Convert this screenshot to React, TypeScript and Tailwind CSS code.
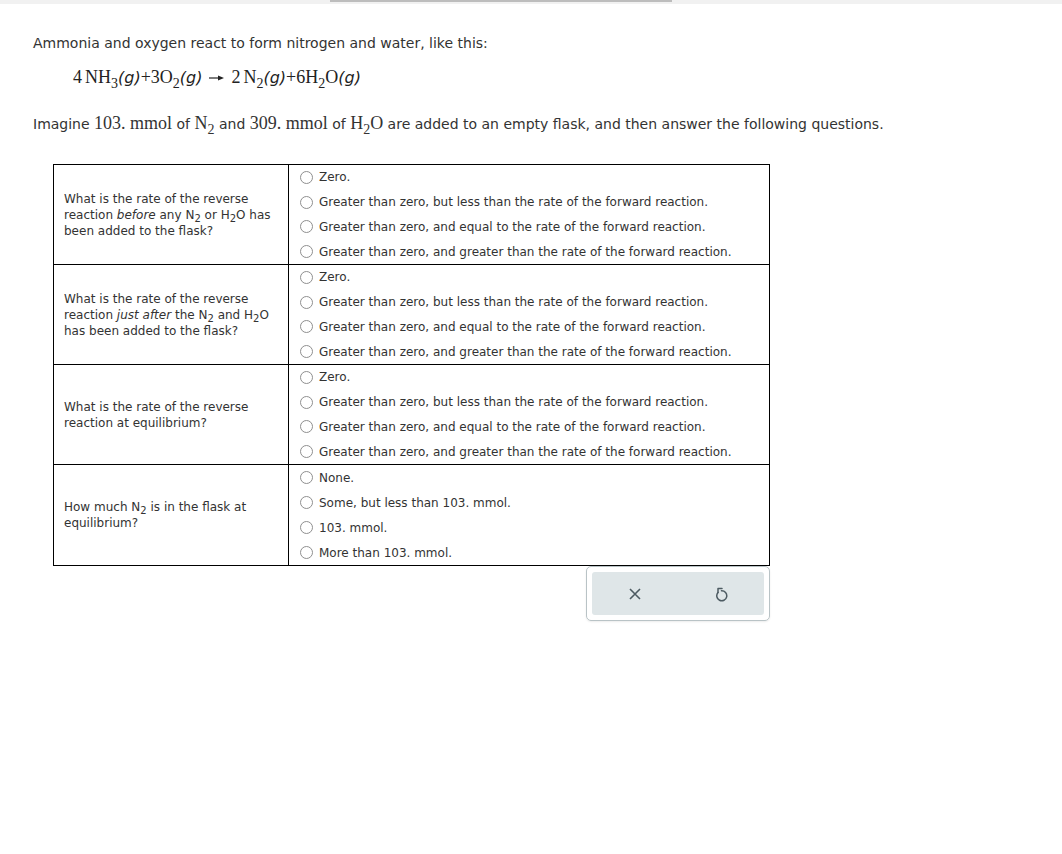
import type { ReactNode } from 'react';

const OPTS_RATE = [
  'Zero.',
  'Greater than zero, but less than the rate of the forward reaction.',
  'Greater than zero, and equal to the rate of the forward reaction.',
  'Greater than zero, and greater than the rate of the forward reaction.',
];

const OPTS_N2 = ['None.', 'Some, but less than 103. mmol.', '103. mmol.', 'More than 103. mmol.'];

const serif = { fontFamily: '"Liberation Serif", "Times New Roman", serif' };

function Sub({ children }: { children: ReactNode }) {
  return <span className="text-[10px] leading-none relative top-[3px]">{children}</span>;
}

function SerifSub({ children }: { children: ReactNode }) {
  return <span className="text-[14px] leading-none relative top-[5px]">{children}</span>;
}

function G() {
  return <i className="text-[16px]" style={{ fontFamily: '"DejaVu Sans", Verdana, sans-serif' }}>(g)</i>;
}

function Radio() {
  return <span className="inline-block w-[13px] h-[13px] rounded-full border border-[#8f8f8f] bg-white shrink-0" />;
}

function Row({ question, options, last }: { question: ReactNode; options: string[]; last?: boolean }) {
  return (
    <div className={`flex h-[100px] ${last ? '' : 'border-b border-black'}`}>
      <div className="w-[235px] border-r border-black px-[10px] flex items-center text-[12px] leading-[16px] text-[#333]">
        <div>{question}</div>
      </div>
      <div className="flex-1 pl-[11px] flex flex-col">
        {options.map((o) => (
          <div key={o} className="flex-1 flex items-center gap-[6px] text-[12px] text-[#333]">
            <Radio />
            <span>{o}</span>
          </div>
        ))}
      </div>
    </div>
  );
}

export default function App() {
  return (
    <div className="min-h-[854px] bg-white" style={{ fontFamily: '"DejaVu Sans", Verdana, sans-serif' }}>
      <div className="h-[4px] bg-[#f1f1f1] flex">
        <div className="ml-[330px] w-[342px] h-[2px] bg-[#bdbdbd]" />
      </div>

      <div className="pl-[33px] pt-[30px] text-[14px] text-[#333]">
        <p className="leading-[18px]">Ammonia and oxygen react to form nitrogen and water, like this:</p>

        <p className="pl-[40px] mt-[14px] text-[18px] leading-[22px] text-[#222] flex items-baseline" style={serif}>
          <span>4</span>
          <span className="ml-[3px]">NH</span>
          <SerifSub>3</SerifSub>
          <G />
          <span>+3O</span>
          <SerifSub>2</SerifSub>
          <G />
          <svg className="mx-[7px] self-center" width="15" height="8" viewBox="0 0 15 8">
            <path d="M0 4 H10" stroke="#222" strokeWidth="1.2" />
            <path d="M9 1.5 L15 4 L9 6.5 Z" fill="#222" />
          </svg>
          <span>2</span>
          <span className="ml-[3px]">N</span>
          <SerifSub>2</SerifSub>
          <G />
          <span>+6H</span>
          <SerifSub>2</SerifSub>
          <span>O</span>
          <G />
        </p>

        <p className="mt-[23px] leading-[22px]">
          Imagine{' '}
          <span className="text-[18px]" style={serif}>
            103. mmol
          </span>{' '}
          of{' '}
          <span className="text-[18px]" style={serif}>
            N<SerifSub>2</SerifSub>
          </span>{' '}
          and{' '}
          <span className="text-[18px]" style={serif}>
            309. mmol
          </span>{' '}
          of{' '}
          <span className="text-[18px]" style={serif}>
            H<SerifSub>2</SerifSub>O
          </span>{' '}
          are added to an empty flask, and then answer the following questions.
        </p>
      </div>

      <div className="ml-[53px] mt-[29px] w-[717px]">
        <div className="border border-black">
          <Row
            question={
              <>
                What is the rate of the reverse reaction <i>before</i> any N<Sub>2</Sub> or H<Sub>2</Sub>O has been added
                to the flask?
              </>
            }
            options={OPTS_RATE}
          />
          <Row
            question={
              <>
                What is the rate of the reverse reaction <i>just after</i> the N<Sub>2</Sub> and H<Sub>2</Sub>O has been
                added to the flask?
              </>
            }
            options={OPTS_RATE}
          />
          <Row question={<>What is the rate of the reverse reaction at equilibrium?</>} options={OPTS_RATE} />
          <Row
            question={
              <>
                How much N<Sub>2</Sub> is in the flask at equilibrium?
              </>
            }
            options={OPTS_N2}
            last
          />
        </div>

        <div className="flex justify-end">
          <div className="w-[184px] h-[55px] border border-[#b9c3c6] rounded-[5px] p-[5px] shadow-[0_1px_2px_rgba(0,0,0,0.08)]">
            <div className="h-full bg-[#dfe6e8] rounded-[3px] flex items-center justify-around">
              <svg width="14" height="14" viewBox="0 0 14 14" fill="none" stroke="#4d5b62" strokeWidth="1.6">
                <path d="M2 2 L12 12 M12 2 L2 12" />
              </svg>
              <svg width="14" height="16" viewBox="0 0 14 16" fill="none" stroke="#4d5b62" strokeWidth="1.5" strokeLinecap="round" strokeLinejoin="round">
                <path d="M4 6.5 A5 5 0 1 0 7.5 4.8" />
                <path d="M8 2.5 H4 V6.5" />
              </svg>
            </div>
          </div>
        </div>
      </div>
    </div>
  );
}
